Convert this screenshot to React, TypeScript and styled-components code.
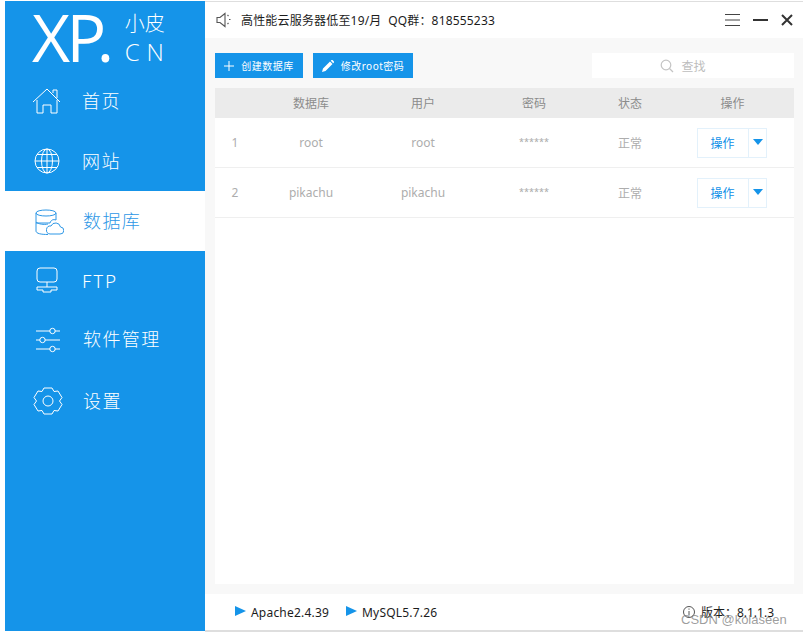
import React from "react";
import styled, { createGlobalStyle } from "styled-components";

const Global = createGlobalStyle`
  html, body { margin: 0; padding: 0; background: #fff; }
  body { font-family: "Noto Sans", "Noto Sans CJK SC", sans-serif; }
  * { box-sizing: border-box; }
`;

const Page = styled.div`
  position: relative;
  width: 803px;
  height: 635px;
  padding: 1px 0 3px 5px;
  display: flex;
  overflow: hidden;
`;
const Sidebar = styled.aside`
  width: 200px;
  margin-bottom: 1px;
  background: #1594e9;
  display: flex;
  flex-direction: column;
`;
const Logo = styled.div`
  height: 70px;
  display: flex;
  padding-left: 27px;
  color: #fff;
`;
const LogoMark = styled.div`
  font-family: "Open Sans", sans-serif;
  font-weight: 400;
  font-size: 66px;
  line-height: 70px;
  height: 70px;
  letter-spacing: -3.5px;
`;
const LogoDot = styled.span`
  margin-left: -6px;
`;
const LogoSide = styled.div`
  margin-left: 14px;
  padding-top: 10px;
  display: flex;
  flex-direction: column;
  gap: 5px;
`;
const LogoCn = styled.div`
  font-family: "Noto Sans CJK SC", sans-serif;
  font-weight: 300;
  font-size: 20px;
  line-height: 24px;
`;
const LogoEn = styled.div`
  font-family: "Open Sans", sans-serif;
  font-weight: 300;
  font-size: 24px;
  line-height: 24px;
  letter-spacing: 7px;
`;
const NavItem = styled.div<{ $active?: boolean; $shift?: number }>`
  height: 60px;
  display: flex;
  align-items: center;
  padding-left: ${(p) => 26 + (p.$shift ?? 0)}px;
  gap: 19px;
  background: ${(p) => (p.$active ? "#fff" : "transparent")};
  color: ${(p) => (p.$active ? "#2d97e6" : "#fff")};
  font-size: 18px;
  font-family: "Noto Sans CJK SC", sans-serif;
  font-weight: 300;
`;
const NavIcon = styled.svg`
  width: 32px;
  height: 32px;
  flex: none;
  fill: none;
  stroke: currentColor;
  stroke-width: 1;
`;
const NavLabel = styled.span<{ $up?: number }>`
  letter-spacing: 1.4px;
  position: relative;
  top: ${(p) => p.$up ?? -1}px;
`;
const Main = styled.main`
  flex: 1;
  display: flex;
  flex-direction: column;
  border-top: 1px solid #dedede;
  border-bottom: 2px solid #dedede;
  min-width: 0;
`;
const TopBar = styled.header`
  height: 36px;
  background: #fff;
  display: flex;
  align-items: center;
  padding: 0 10px 0 11px;
  flex: none;
`;
const Notice = styled.div`
  margin-left: 10px;
  font-size: 12px;
  color: #1c1c1c;
  white-space: pre;
  flex: 1;
  letter-spacing: 0.18px;
`;
const WinButtons = styled.div`
  display: flex;
  align-items: center;
  gap: 13px;
`;
const Content = styled.section`
  flex: 1;
  background: #f8f8f8;
  padding: 15px 9px 10px 10px;
  display: flex;
  flex-direction: column;
  min-height: 0;
`;
const Toolbar = styled.div`
  height: 25px;
  display: flex;
  gap: 10px;
  margin-bottom: 10px;
`;
const PrimaryButton = styled.div<{ $w: number }>`
  width: ${(p) => p.$w}px;
  background: #1594e9;
  color: #fff;
  font-size: 10px;
  letter-spacing: 0.5px;
  display: flex;
  align-items: center;
  justify-content: center;
  gap: 7px;
`;
const Search = styled.div`
  width: 202px;
  margin-left: auto;
  background: #fff;
  color: #bdbdbd;
  font-size: 12px;
  display: flex;
  align-items: center;
  justify-content: center;
  gap: 7px;
  padding-right: 20px;
`;
const TablePanel = styled.div`
  flex: 1;
  background: #fff;
`;
const Row = styled.div<{ $head?: boolean }>`
  display: grid;
  grid-template-columns: 40px 112px 112px 110px 82px 123px;
  align-items: center;
  justify-items: center;
  height: ${(p) => (p.$head ? 30 : 50)}px;
  background: ${(p) => (p.$head ? "#ebebeb" : "#fff")};
  color: ${(p) => (p.$head ? "#8b8b8b" : "#adadad")};
  font-size: 12px;
  border-bottom: ${(p) => (p.$head ? "none" : "1px solid #efefef")};
`;
const Stars = styled.span`
  color: #a9a9a9;
  font-size: 9px;
  position: relative;
  top: -1px;
`;
const ActionGroup = styled.div`
  width: 70px;
  height: 30px;
  border: 1px solid #e3f1fb;
  display: flex;
  color: #0f8fe8;
  margin-left: -1px;
`;
const ActionLabel = styled.div`
  flex: 1;
  display: flex;
  align-items: center;
  justify-content: center;
  padding-top: 1px;
`;
const ActionCaret = styled.div`
  width: 18px;
  margin-left: 1px;
  border-left: 1px solid #e3f1fb;
  display: flex;
  justify-content: center;
  padding-top: 10px;
  &::before {
    content: "";
    width: 0;
    height: 0;
    border-left: 5px solid transparent;
    border-right: 5px solid transparent;
    border-top: 6px solid #1594e9;
  }
`;
const Footer = styled.footer`
  height: 36px;
  flex: none;
  background: #fff;
  display: flex;
  align-items: center;
  padding: 0 29px 0 30px;
  font-size: 12px;
  color: #1c1c1c;
`;
const Service = styled.div`
  display: flex;
  align-items: center;
  gap: 5px;
  margin-right: 17px;
  letter-spacing: 0.2px;
  &::before {
    content: "";
    width: 0;
    height: 0;
    margin-top: -3px;
    border-top: 5.5px solid transparent;
    border-bottom: 5.5px solid transparent;
    border-left: 11px solid #1594e9;
  }
`;
const Version = styled.div`
  margin-left: auto;
  display: flex;
  align-items: center;
  gap: 6px;
`;
const Watermark = styled.div`
  position: absolute;
  left: 681px;
  top: 611px;
  font-family: "Liberation Sans", sans-serif;
  font-size: 13px;
  line-height: 18px;
  color: rgba(120, 120, 120, 0.72);
`;

const rows = [
  { id: 1, name: "root" },
  { id: 2, name: "pikachu" },
];

export default function App() {
  return (
    <Page>
      <Global />
      <Sidebar>
        <Logo>
          <LogoMark>
            XP<LogoDot>.</LogoDot>
          </LogoMark>
          <LogoSide>
            <LogoCn>小皮</LogoCn>
            <LogoEn>CN</LogoEn>
          </LogoSide>
        </Logo>
        <NavItem>
          <NavIcon viewBox="0 0 32 32">
            <path d="M2 17 16 4l13 13M22 8V5h4v8M6 15v13h6v-8h8v8h6V15" />
          </NavIcon>
          <NavLabel>首页</NavLabel>
        </NavItem>
        <NavItem>
          <NavIcon viewBox="0 0 32 32">
            <circle cx="16" cy="16" r="12" />
            <ellipse cx="16" cy="16" rx="5.5" ry="12" />
            <path d="M16 4v24M4 16h24M6 9.500h20M6 22.500h20" />
          </NavIcon>
          <NavLabel>网站</NavLabel>
        </NavItem>
        <NavItem $active $shift={1}>
          <NavIcon viewBox="0 0 32 32">
            <path d="M4 8c0-4 20-4 20 0v7c-3-1-5 0-6 3H4zM4 8c0 4 20 4 20 0M4 17c2 2 8 3 12 2M4 18v8c0 2.500 5 3.500 12 3.500" />
            <path d="M18 29h10a3.500 3.500 0 0 0 .5-7 5 5 0 0 0-9.500-1 4 4 0 0 0-1 8z" />
          </NavIcon>
          <NavLabel>数据库</NavLabel>
        </NavItem>
        <NavItem>
          <NavIcon viewBox="0 0 32 32">
            <rect x="6" y="3" width="20" height="14" rx="3" />
            <path d="M16 17v5M6 22h20v3h-6v2h-8v-2H6z" />
          </NavIcon>
          <NavLabel>FTP</NavLabel>
        </NavItem>
        <NavItem $shift={1}>
          <NavIcon viewBox="0 0 32 32">
            <path d="M4 6h14M23 6h5M4 15h4M13 15h15M4 24h14M23 24h5" />
            <circle cx="20.500" cy="6" r="2.700" />
            <circle cx="10.500" cy="15" r="2.700" />
            <circle cx="20.500" cy="24" r="2.700" />
          </NavIcon>
          <NavLabel $up={-3}>软件管理</NavLabel>
        </NavItem>
        <NavItem $shift={1}>
          <NavIcon viewBox="0 0 32 32">
            <path d="M12 3h8l2 3.500 4-.5 4 6.500-2.500 3.500 2.500 3.500-4 6.500-4-.5-2 3.500h-8l-2-3.500-4 .5-4-6.500L4.500 16 2 12.500 6 6l4 .5z" strokeLinejoin="round" />
            <circle cx="16" cy="16" r="5" />
          </NavIcon>
          <NavLabel>设置</NavLabel>
        </NavItem>
      </Sidebar>
      <Main>
        <TopBar>
          <svg width="15" height="16" viewBox="0 0 15 16" fill="none" stroke="#555" strokeWidth="1.100">
            <path d="M1 5.500h3L9 1.500v13L4 10.500H1z" />
            <path d="M11.500 3l1 1M13 7.500h1.500M11.500 12l1-1" />
          </svg>
          <Notice>高性能云服务器低至19/月  QQ群：818555233</Notice>
          <WinButtons>
            <svg width="15" height="12" viewBox="0 0 15 12" stroke="#444" strokeWidth="1">
              <path d="M0 .5h15M0 6h15M0 11.500h15" />
            </svg>
            <svg width="15" height="12" viewBox="0 0 15 12" stroke="#333" strokeWidth="2">
              <path d="M0 6h15" />
            </svg>
            <svg width="12" height="12" viewBox="0 0 12 12" stroke="#333" strokeWidth="2">
              <path d="M1 1l10 10M11 1 1 11" />
            </svg>
          </WinButtons>
        </TopBar>
        <Content>
          <Toolbar>
            <PrimaryButton $w={88}>
              <svg width="10" height="10" viewBox="0 0 10 10" stroke="#fff" strokeWidth="1">
                <path d="M5 0v10M0 5h10" />
              </svg>
              创建数据库
            </PrimaryButton>
            <PrimaryButton $w={100}>
              <svg width="12" height="12" viewBox="0 0 12 12" fill="#fff">
                <path d="M0 12l1-3.500L8 1.500 10.500 4l-7 7zM8.800.8l.7-.7a.8.8 0 0 1 1.100 0l1.300 1.300a.8.8 0 0 1 0 1.100l-.7.700z" />
              </svg>
              修改root密码
            </PrimaryButton>
            <Search>
              <svg width="14" height="14" viewBox="0 0 14 14" fill="none" stroke="#c4c4c4" strokeWidth="1.200">
                <circle cx="6" cy="6" r="4.800" />
                <path d="M9.500 9.500 13 13" />
              </svg>
              查找
            </Search>
          </Toolbar>
          <TablePanel>
            <Row $head>
              <span />
              <span>数据库</span>
              <span>用户</span>
              <span>密码</span>
              <span>状态</span>
              <span>操作</span>
            </Row>
            {rows.map((r) => (
              <Row key={r.id}>
                <span>{r.id}</span>
                <span>{r.name}</span>
                <span>{r.name}</span>
                <Stars>******</Stars>
                <span>正常</span>
                <ActionGroup>
                  <ActionLabel>操作</ActionLabel>
                  <ActionCaret />
                </ActionGroup>
              </Row>
            ))}
          </TablePanel>
        </Content>
        <Footer>
          <Service>Apache2.4.39</Service>
          <Service>MySQL5.7.26</Service>
          <Version>
            <svg width="12" height="12" viewBox="0 0 12 12" fill="none" stroke="#555" strokeWidth="1">
              <circle cx="6" cy="6" r="5.500" />
              <path d="M6 5v4.500M6 2.500v1.200" />
            </svg>
            版本：8.1.1.3
          </Version>
        </Footer>
      </Main>
      <Watermark>CSDN @kolaseen</Watermark>
    </Page>
  );
}
